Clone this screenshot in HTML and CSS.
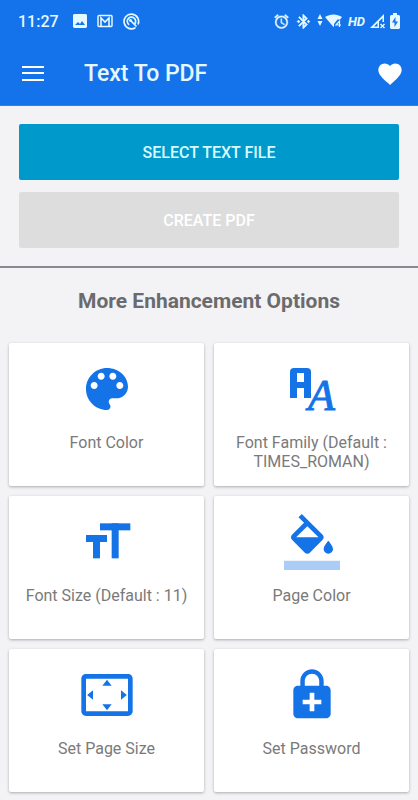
FILE: index.html
```
<!DOCTYPE html>
<html lang="en">

<head>
    <meta charset="UTF-8">
    <meta name="viewport" content="width=device-width, initial-scale=1">
    <title>Text To PDF</title>
    <link rel="stylesheet" href="styles.css">
</head>

<body>
    <header class="header">
        <div class="status-bar">
            <div class="status-left">
                <span class="time">11:27</span>
                <svg width="14" height="14" viewBox="0 0 14 14" aria-hidden="true">
                    <path fill="currentColor" fill-rule="evenodd" d="M1 0h12l1 1v12l-1 1H1l-1-1V1zM2 11h10L9 7l-2 3-2-2z"/>
                </svg>
                <svg width="16" height="14" viewBox="0 0 16 14" aria-hidden="true">
                    <rect x="1" y="1.5" width="14" height="11" rx="1" fill="none" stroke="currentColor" stroke-width="1.5"/>
                    <path fill="none" stroke="currentColor" stroke-width="1.6" d="M4 12V4l4 4 4-4v8"/>
                </svg>
                <svg width="17" height="17" viewBox="0 0 17 17" aria-hidden="true">
                    <g fill="none" stroke="currentColor" stroke-width="1.7">
                        <path d="M12.5 14.5A7.3 7.3 0 1 1 15 11.5"/>
                        <path d="M6.2 11.8A4.2 4.2 0 1 1 11.8 10.8M7 7l6.5 6.5"/>
                    </g>
                    <circle cx="7.5" cy="7.5" r="1.4" fill="currentColor"/>
                </svg>
            </div>
            <div class="status-right">
                <svg width="17" height="17" viewBox="0 0 24 24" aria-hidden="true">
                    <path fill="currentColor" stroke="currentColor" stroke-width=".5" d="M22 5.72l-4.6-3.86-1.29 1.53 4.6 3.86L22 5.72zM7.88 3.39L6.6 1.86 2 5.71l1.29 1.53 4.59-3.85zM12.5 8H11v6l4.75 2.85.75-1.23-4-2.37V8zM12 4c-4.97 0-9 4.03-9 9s4.02 9 9 9c4.97 0 9-4.03 9-9s-4.03-9-9-9zm0 16c-3.87 0-7-3.13-7-7s3.13-7 7-7 7 3.13 7 7-3.13 7-7 7z"/>
                </svg>
                <svg width="17" height="17" viewBox="0 0 24 24" aria-hidden="true">
                    <path fill="currentColor" stroke="currentColor" stroke-width=".8" d="M7 12l-2-2-2 2 2 2 2-2zm10.71-4.29L12 2h-1v7.59L6.41 5 5 6.41 10.59 12 5 17.59 6.41 19 11 14.41V22h1l5.71-5.71-4.3-4.29 4.3-4.29zM13 5.83l1.88 1.88L13 9.59V5.83zm1.88 10.46L13 18.17v-3.76l1.88 1.88zM19 10l-2 2 2 2 2-2-2-2z"/>
                </svg>
                <svg width="26" height="14" viewBox="0 0 26 14" aria-hidden="true">
                    <path fill="currentColor" d="M3 0l2.5 5h-5zM3 12L.5 7h5zM8 3c5-3.5 12-3.5 17 0l-2 2.5h-2.500L17 10v2.500l-.5.5z"/>
                    <path fill="none" stroke="currentColor" stroke-width="1.2" d="M22.5 13V7L19 11h5"/>
                </svg>
                <span class="hd">HD</span>
                <svg width="15" height="15" viewBox="0 0 15 15" aria-hidden="true">
                    <path fill="currentColor" fill-rule="evenodd" d="M14 0v8h-1.5V4L9 7.5V14H0zM7.5 9L4 12.5h3.5z"/>
                    <path fill="none" stroke="currentColor" stroke-width="1.4" d="M10.5 10l4 4m0-4l-4 4"/>
                </svg>
                <svg width="10" height="16" viewBox="0 0 10 16" aria-hidden="true">
                    <path fill="currentColor" fill-rule="evenodd" d="M3 0h4v2h2l1 1v12l-1 1H1l-1-1V3l1-1h2zM5.5 4L2 9.500h2.500V14L8 8.500H5.500z"/>
                </svg>
            </div>
        </div>
        <div class="toolbar">
            <button class="icon-button" type="button" aria-label="Menu">
                <svg width="28" height="28" viewBox="0 0 28 28" aria-hidden="true">
                    <path fill="currentColor" d="M3 6h22v2H3zM3 12h22v2H3zM3 19h22v2H3z"/>
                </svg>
            </button>
            <h1 class="title">Text To PDF</h1>
            <button class="icon-button" type="button" aria-label="Favorite">
                <svg width="28" height="28" viewBox="0 0 24 24" aria-hidden="true">
                    <path fill="currentColor" d="M12 21.35l-1.45-1.32C5.4 15.36 2 12.28 2 8.5 2 5.42 4.42 3 7.5 3c1.74 0 3.41.81 4.5 2.09C13.09 3.81 14.76 3 16.5 3 19.58 3 22 5.42 22 8.5c0 3.78-3.4 6.86-8.55 11.54L12 21.35z"/>
                </svg>
            </button>
        </div>
    </header>

    <main>
        <div class="actions">
            <button class="action-button" type="button">SELECT TEXT FILE</button>
            <button class="action-button" type="button" disabled>CREATE PDF</button>
        </div>

        <h2 class="section-title">More Enhancement Options</h2>

        <div class="options">
            <button class="card" type="button">
                <svg class="card-icon" viewBox="0 0 24 24" aria-hidden="true">
                    <path d="M12 3c-4.97 0-9 4.03-9 9s4.03 9 9 9c.83 0 1.5-.67 1.5-1.5 0-.39-.15-.74-.39-1.01-.23-.26-.38-.61-.38-.99 0-.83.67-1.5 1.5-1.5H16c2.76 0 5-2.24 5-5 0-4.42-4.03-8-9-8zm-5.5 9c-.83 0-1.5-.67-1.5-1.5S5.67 9 6.5 9 8 9.67 8 10.5 7.33 12 6.5 12zm3-4C8.67 8 8 7.33 8 6.5S8.67 5 9.5 5s1.5.67 1.5 1.5S10.33 8 9.5 8zm5 0c-.83 0-1.5-.67-1.5-1.5S13.67 5 14.5 5s1.5.67 1.5 1.5S15.33 8 14.5 8zm3 4c-.83 0-1.5-.67-1.5-1.5S16.67 9 17.5 9s1.5.67 1.5 1.5-.67 1.5-1.5 1.5z"/>
                </svg>
                <span>Font Color</span>
            </button>
            <button class="card" type="button">
                <svg class="card-icon" viewBox="0 0 56 56" aria-hidden="true">
                    <rect x="6" y="7" width="21" height="12" rx="4"/>
                    <rect x="6" y="12" width="7" height="25"/>
                    <rect x="20" y="12" width="7" height="25"/>
                    <rect x="6" y="21" width="21" height="6"/>
                    <rect x="13" y="12" width="7" height="9" fill="#fff"/>
                    <text class="icon-letter" x="24" y="49">A</text>
                </svg>
                <span>Font Family (Default : TIMES_ROMAN)</span>
            </button>
            <button class="card" type="button">
                <svg class="card-icon" viewBox="0 0 24 24" aria-hidden="true">
                    <rect x="9" y="4" width="13" height="3"/>
                    <rect x="14" y="4" width="3" height="15"/>
                    <rect x="3" y="9" width="9" height="3"/>
                    <rect x="6" y="9" width="3" height="10"/>
                </svg>
                <span>Font Size (Default : 11)</span>
            </button>
            <button class="card" type="button">
                <svg class="card-icon" viewBox="0 0 24 24" aria-hidden="true">
                    <path d="M16.56 8.94L7.62 0 6.21 1.41l2.38 2.38-5.15 5.15c-.59.59-.59 1.54 0 2.12l5.5 5.5c.29.29.68.44 1.06.44s.77-.15 1.06-.44l5.5-5.5c.59-.58.59-1.53 0-2.12zM5.21 10L10 5.21 14.79 10H5.21zM19 11.5s-2 2.17-2 3.5c0 1.1.9 2 2 2s2-.9 2-2c0-1.33-2-3.5-2-3.5z"/>
                    <path fill-opacity=".36" d="M0 20h24v4H0z"/>
                </svg>
                <span>Page Color</span>
            </button>
            <button class="card" type="button">
                <svg class="card-icon" viewBox="0 0 24 24" aria-hidden="true">
                    <path d="M12.01 5.5L10 8h4l-1.99-2.5zM18 10v4l2.5-1.99L18 10zM6 10l-2.5 2.01L6 14v-4zm8 6h-4l2.01 2.5L14 16zm7-13H3c-1.1 0-2 .9-2 2v14c0 1.1.9 2 2 2h18c1.1 0 2-.9 2-2V5c0-1.1-.9-2-2-2zm0 16.01H3V4.99h18v14.02z"/>
                </svg>
                <span>Set Page Size</span>
            </button>
            <button class="card" type="button">
                <svg class="card-icon" viewBox="0 0 24 24" aria-hidden="true">
                    <path d="M18 8h-1V6c0-2.76-2.24-5-5-5S7 3.24 7 6v2H6c-1.1 0-2 .9-2 2v10c0 1.1.9 2 2 2h12c1.1 0 2-.9 2-2V10c0-1.1-.9-2-2-2zM8.9 6c0-1.71 1.39-3.1 3.1-3.1s3.1 1.39 3.1 3.1v2H8.9V6zM16 16h-3v3h-2v-3H8v-2h3v-3h2v3h3v2z"/>
                </svg>
                <span>Set Password</span>
            </button>
        </div>
    </main>
</body>

</html>
```

FILE: styles.css
```
* {
    box-sizing: border-box;
}

body {
    margin: 0;
    font-family: Roboto, Arial, sans-serif;
    background-color: #f3f3f6;
    color: #757575;
}

button {
    border: none;
    font-family: inherit;
    cursor: pointer;
}

svg {
    display: block;
    flex-shrink: 0;
}

.header {
    background-color: #1473ea;
    color: #fff;
    border-bottom: 1px solid #3c80d2;
}

.status-bar {
    display: flex;
    justify-content: space-between;
    height: 42px;
    padding: 0 18px;
    color: #e4f8ff;
}

.status-left,
.status-right {
    display: flex;
    align-items: center;
}

.status-left {
    gap: 10px;
}

.status-right {
    gap: 5px;
}

.time {
    margin-right: 4px;
    font-size: 16px;
    font-weight: 500;
}

.hd {
    font-size: 13px;
    font-weight: 700;
    font-style: italic;
}

.toolbar {
    display: flex;
    align-items: center;
    height: 63px;
    padding: 0 14px 0 19px;
}

.icon-button {
    padding: 0;
    background: none;
    color: inherit;
}

.title {
    flex-grow: 1;
    margin: 0 0 0 37px;
    font-size: 23px;
    font-weight: 500;
    color: #e4f8ff;
}

.actions {
    display: flex;
    flex-direction: column;
    gap: 12px;
    padding: 18px 19px;
    border-bottom: 2px solid #88898c;
}

.action-button {
    height: 56px;
    border-radius: 2px;
    background-color: #0099cc;
    color: #d9fbff;
    font-size: 16px;
    font-weight: 500;
}

.action-button:disabled {
    background-color: #dddddd;
    color: #fff;
    cursor: default;
}

.section-title {
    margin: 0;
    padding: 21px 9px 30px;
    font-size: 21px;
    line-height: 24px;
    font-weight: 700;
    text-align: center;
    color: #6b6b6d;
}

.options {
    display: grid;
    grid-template-columns: 1fr 1fr;
    gap: 10px;
    padding: 0 9px 8px;
}

.card {
    display: flex;
    flex-direction: column;
    align-items: center;
    gap: 16px;
    min-height: 143px;
    padding: 18px 9px 15px;
    border-radius: 2px;
    background-color: #fff;
    box-shadow: 0 1px 3px rgba(0, 0, 0, 0.3);
    color: #7a7a7a;
    font-size: 16px;
    line-height: 19px;
}

.card-icon {
    width: 56px;
    height: 56px;
    fill: #1473e6;
    overflow: visible;
}

.icon-letter {
    font-family: "Liberation Serif", serif;
    font-size: 44px;
    font-style: italic;
    stroke: #1473e6;
}
```
